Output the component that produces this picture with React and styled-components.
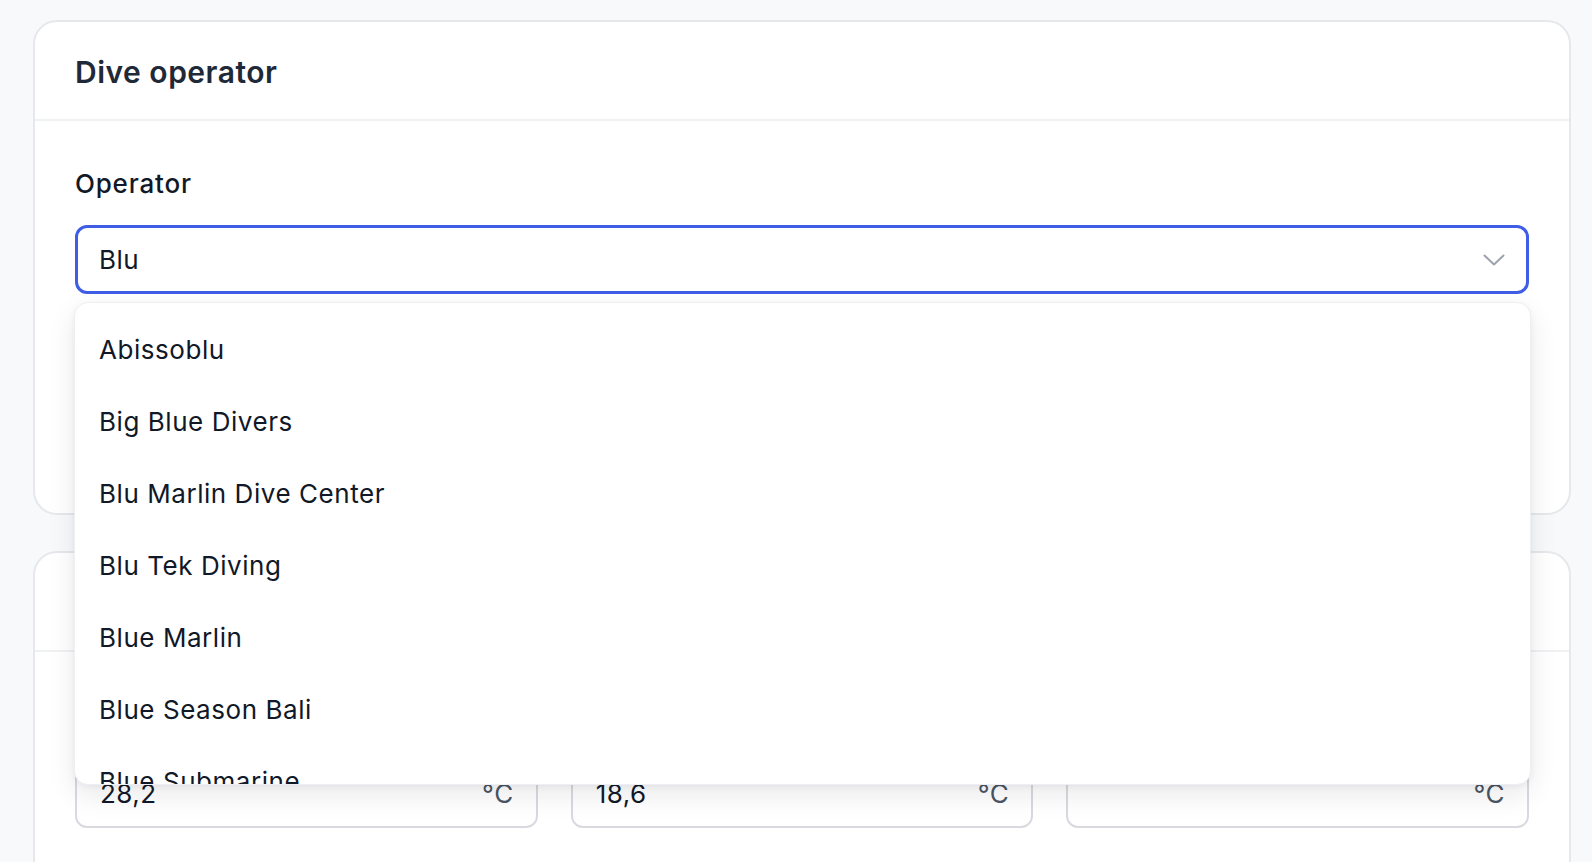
import React, { useState } from "react";
import styled, { createGlobalStyle } from "styled-components";

const GlobalStyle = createGlobalStyle`
  html, body {
    margin: 0;
    padding: 0;
    background: #f8f9fb;
    font-family: Inter, "Noto Sans", "Liberation Sans", sans-serif;
    color: #1f2937;
    overflow: hidden;
  }
`;

const Page = styled.div`
  display: flex;
  flex-direction: column;
  gap: 36px;
  padding: 20px 21px 0 33px;
  height: 862px;
  box-sizing: border-box;
`;

const Card = styled.section`
  position: relative;
  z-index: ${(p) => (p.$raised ? 2 : 1)};
  background: #fff;
  border: 2px solid #e7e8ec;
  border-radius: 24px;
  flex-shrink: 0;
`;

const CardHeader = styled.header`
  height: 95px;
  display: flex;
  align-items: center;
  padding: 2px 40px 0;
  border-bottom: 2px solid #f0f1f3;
`;

const Title = styled.h2`
  margin: 0;
  font-size: 30px;
  font-weight: 600;
  color: #1f2937;
  letter-spacing: 0.5px;
`;

const CardBody = styled.div`
  padding: ${(p) => p.$top || 47}px 40px ${(p) => p.$bottom || 40}px;
`;

const Label = styled.label`
  display: block;
  font-size: 26px;
  line-height: 32px;
  font-weight: 500;
  color: #111827;
  letter-spacing: 0.8px;
  margin-bottom: 25px;
`;

const Field = styled.div`
  position: relative;
`;

const SelectBox = styled.div`
  height: 69px;
  box-sizing: border-box;
  display: flex;
  align-items: center;
  justify-content: space-between;
  padding: 0 21px 0 21px;
  border: 3px solid #405de6;
  border-radius: 12px;
  background: #fff;
  font-size: 26px;
  letter-spacing: 0.5px;
  color: #111827;
`;

const Menu = styled.ul`
  position: absolute;
  left: -1px;
  right: -2px;
  top: calc(100% + 8px);
  height: 483px;
  box-sizing: border-box;
  margin: 0;
  padding: 10px 0 0;
  list-style: none;
  overflow: hidden;
  background: #fff;
  border: 1px solid #eeeff2;
  border-radius: 14px;
  box-shadow: 0 10px 28px rgba(17, 24, 39, 0.09), 0 2px 6px rgba(17, 24, 39, 0.05);
  z-index: 20;
`;

const MenuItem = styled.li`
  height: 72px;
  display: flex;
  align-items: center;
  padding: 0 24px;
  font-size: 26px;
  letter-spacing: 0.55px;
  color: #111827;
  background: ${(p) => (p.$active ? "#f3f4f6" : "transparent")};
  cursor: pointer;
`;

const Grid = styled.div`
  display: grid;
  grid-template-columns: repeat(3, 1fr);
  gap: 33px;
`;

const NumberBox = styled.div`
  height: 69px;
  box-sizing: border-box;
  display: flex;
  align-items: center;
  justify-content: space-between;
  padding: 0 22px 0 23px;
  border: 2px solid #d8dadf;
  border-radius: 12px;
  font-size: 26px;
  letter-spacing: 0.5px;
  color: #111827;
`;

const Unit = styled.span`
  color: #4b5563;
`;

const Chevron = () => (
  <svg width="22" height="12" viewBox="0 0 22 12" fill="none">
    <polyline
      points="1.5,1.5 11,10.5 20.5,1.5"
      stroke="#9ca3af"
      strokeWidth="2"
      strokeLinecap="round"
      strokeLinejoin="round"
    />
  </svg>
);

const operators = [
  "Abissoblu",
  "Big Blue Divers",
  "Blu Marlin Dive Center",
  "Blu Tek Diving",
  "Blue Marlin",
  "Blue Season Bali",
  "Blue Submarine",
  "Blue Water Divers",
];

const temps = [
  { label: "Air", value: "28,2" },
  { label: "Surface", value: "18,6" },
  { label: "Bottom", value: "" },
];

export default function App() {
  const [hover, setHover] = useState(null);

  return (
    <>
      <GlobalStyle />
      <Page>
        <Card $raised>
          <CardHeader>
            <Title>Dive operator</Title>
          </CardHeader>
          <CardBody $bottom={219}>
            <Label>Operator</Label>
            <Field>
              <SelectBox>
                <span>Blu</span>
                <Chevron />
              </SelectBox>
              <Menu>
                {operators.map((name, i) => (
                  <MenuItem
                    key={name}
                    $active={hover === i}
                    onMouseEnter={() => setHover(i)}
                    onMouseLeave={() => setHover(null)}
                  >
                    {name}
                  </MenuItem>
                ))}
              </Menu>
            </Field>
          </CardBody>
        </Card>

        <Card>
          <CardHeader>
            <Title>Conditions</Title>
          </CardHeader>
          <CardBody $top={50} $bottom={80}>
            <Grid>
              {temps.map((t) => (
                <div key={t.label}>
                  <Label>{t.label} temperature</Label>
                  <NumberBox>
                    <span>{t.value}</span>
                    <Unit>°C</Unit>
                  </NumberBox>
                </div>
              ))}
            </Grid>
          </CardBody>
        </Card>
      </Page>
    </>
  );
}
